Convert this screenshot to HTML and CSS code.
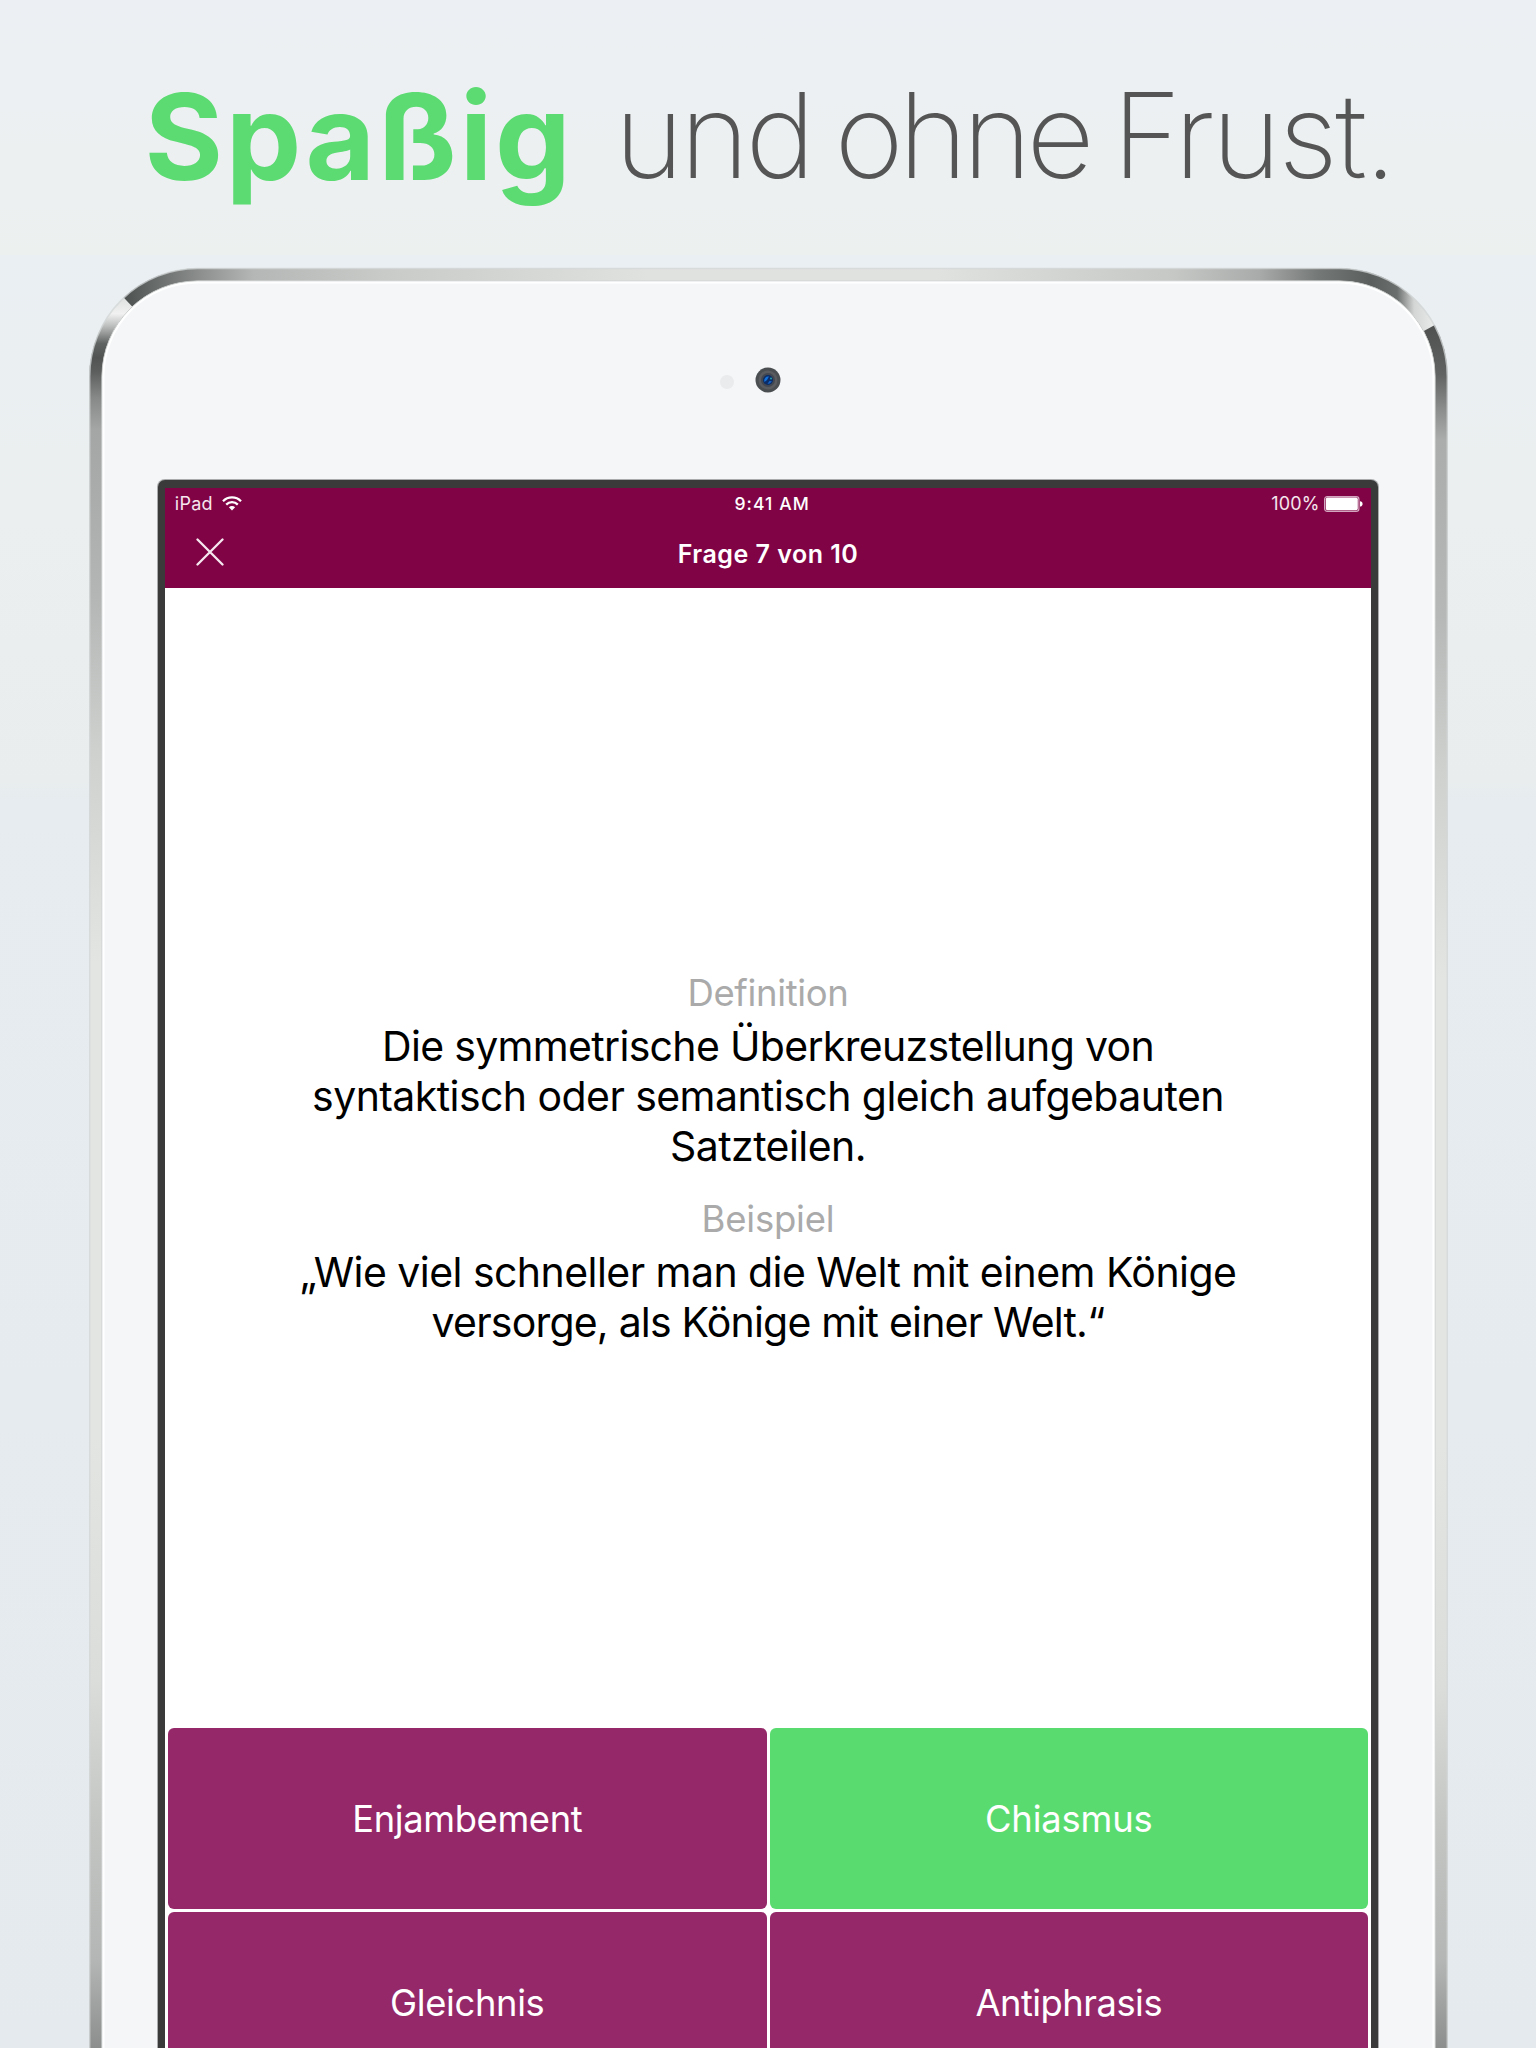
FILE: index.html
```
<!DOCTYPE html>
<html lang="de">
<head>
<meta charset="utf-8">
<title>Spaßig und ohne Frust.</title>
<link rel="stylesheet" href="styles.css">
</head>
<body>
<div class="page">
  <h1 class="headline">
    <span class="headline-strong">Spaßig</span>
    <span class="headline-light"><span class="w-und">und</span><span class="w-ohne">ohne</span><span class="w-frust">Frust.</span></span>
  </h1>

  <main class="device">
    <svg class="bezel" width="1359" height="1781" viewBox="88.5 267 1359 1781" aria-hidden="true">
      <defs>
        <linearGradient id="left" gradientUnits="userSpaceOnUse" x1="0" y1="298" x2="0" y2="2048">
          <stop offset="0" stop-color="#dfe1e0"/><stop offset=".009" stop-color="#f0f1f0"/>
          <stop offset=".016" stop-color="#bcbebd"/><stop offset=".026" stop-color="#606463"/>
          <stop offset=".034" stop-color="#505352"/><stop offset=".042" stop-color="#5b5e5d"/>
          <stop offset=".057" stop-color="#868988"/><stop offset=".075" stop-color="#a3a6a5"/>
          <stop offset=".17" stop-color="#b3b6b4"/><stop offset=".26" stop-color="#cfd1cf"/>
          <stop offset=".38" stop-color="#e3e5e3"/><stop offset=".65" stop-color="#e3e5e3"/>
          <stop offset=".79" stop-color="#dbdddb"/><stop offset=".87" stop-color="#c4c6c4"/>
          <stop offset=".95" stop-color="#b3b6b4"/><stop offset="1" stop-color="#8b8e8c"/>
        </linearGradient>
        <linearGradient id="right" gradientUnits="userSpaceOnUse" x1="0" y1="323" x2="0" y2="2048">
          <stop offset="0" stop-color="#4d504f"/><stop offset=".03" stop-color="#606362"/>
          <stop offset=".05" stop-color="#8a8d8c"/><stop offset=".068" stop-color="#abadac"/>
          <stop offset=".17" stop-color="#b5b8b6"/><stop offset=".26" stop-color="#cfd1cf"/>
          <stop offset=".38" stop-color="#e3e5e3"/><stop offset=".65" stop-color="#e3e5e3"/>
          <stop offset=".79" stop-color="#dbdddb"/><stop offset=".87" stop-color="#c4c6c4"/>
          <stop offset=".95" stop-color="#b3b6b4"/><stop offset="1" stop-color="#8b8e8c"/>
        </linearGradient>
        <linearGradient id="top" gradientUnits="userSpaceOnUse" x1="122" y1="0" x2="1436" y2="0">
          <stop offset="0" stop-color="#4b4f4e"/><stop offset=".02" stop-color="#626665"/>
          <stop offset=".06" stop-color="#8d908f"/><stop offset=".1" stop-color="#b4b7b5"/>
          <stop offset=".2" stop-color="#c9cbc9"/><stop offset=".4" stop-color="#e0e2e0"/>
          <stop offset=".62" stop-color="#e0e2e0"/><stop offset=".8" stop-color="#c6c8c6"/>
          <stop offset=".865" stop-color="#a9abaa"/><stop offset=".91" stop-color="#747877"/>
          <stop offset=".95" stop-color="#5a5e5d"/><stop offset=".97" stop-color="#6a6e6d"/>
          <stop offset=".983" stop-color="#d4d6d5"/><stop offset="1" stop-color="#eceded"/>
        </linearGradient>
      </defs>
      <path d="M100 2060V375.500a96.500 96.500 0 0 1 96.500-96.500H1339.500a96.500 96.500 0 0 1 96.500 96.500V2060z" fill="#f4f6f8"/>
      <g fill="none" stroke-width="12.500">
        <path stroke="url(#left)" d="M95 2060V377A102.500 102.500 0 0 1 127.400 302"/>
        <path stroke="url(#top)" d="M127.400 302A102.500 102.500 0 0 1 197.500 274.500H1338.500A102.500 102.500 0 0 1 1428.800 328"/>
        <path stroke="url(#right)" d="M1428.800 328A102.500 102.500 0 0 1 1441 377V2060"/>
      </g>
      <g fill="none">
        <path stroke="#d3d7d7" stroke-width="1.500" d="M89.200 2060V376.500a108 108 0 0 1 108-108H1338.800a108 108 0 0 1 108 108V2060" stroke-opacity=".75"/>
        <path stroke="#c9cccb" d="M101.500 2060V376.500a95.500 95.500 0 0 1 95.500-95.500H1339a95.500 95.500 0 0 1 95.500 95.500V2060"/>
        <path stroke="#fff" stroke-width="2" d="M103 2060V376.500a94 94 0 0 1 94-94H1339a94 94 0 0 1 94 94V2060"/>
      </g>
    </svg>

    <div class="sensors">
      <span class="sensor"></span>
      <svg class="camera" width="26" height="26" viewBox="0 0 26 26">
        <circle cx="13" cy="13" r="12.500" fill="#4b4e51"/>
        <circle cx="13" cy="13" r="9.500" fill="#5a5c5f"/>
        <circle cx="13" cy="13" r="7" fill="#434850"/>
        <circle cx="13" cy="13" r="5" fill="#0b2c66"/>
        <path d="M9.500 15a4 4 0 0 1 4.500-5.500l-2 3.500z" fill="#1370d8"/>
        <path d="M12.500 16.800c2 .2 3.600-1 4.300-2.600l-2.300-.4z" fill="#1560c0"/>
        <circle cx="16" cy="11.500" r="1" fill="#2aa0a8"/>
      </svg>
    </div>

    <section class="screen">
      <header class="bar">
        <div class="status">
          <div class="status-left">
            <span class="carrier">iPad</span>
            <svg width="20" height="15" viewBox="0 0 20 15" fill="none" stroke="#fff" stroke-width="2.300">
              <path d="M1 5.200a12.700 12.700 0 0 1 18 0"/>
              <path d="M4.200 8.600a8.200 8.200 0 0 1 11.600 0"/>
              <path d="M10 14.500L6.900 11.200a4.400 4.400 0 0 1 6.200 0z" fill="#fff" stroke="none"/>
            </svg>
          </div>
          <span class="time">9:41 AM</span>
          <div class="status-right">
            <span class="percent">100%</span>
            <svg width="39" height="16" viewBox="0 0 39 16">
              <rect x=".6" y=".6" width="34.300" height="14.800" rx="2.600" fill="none" stroke="#d3a6bf" stroke-width="1.200"/>
              <rect x="1.800" y="1.600" width="32" height="12.600" rx="1.600" fill="#fff"/>
              <path d="M36 5.300c1.500 0 2.600 1.200 2.600 2.600S37.500 10.500 36 10.500z" fill="#fff"/>
            </svg>
          </div>
        </div>
        <div class="nav">
          <svg class="close" width="28" height="28" viewBox="0 0 28 28" stroke="#f6e9f0" stroke-width="2.300" stroke-linecap="round">
            <path d="M1.500 1.500l25 25M26.500 1.500l-25 25"/>
          </svg>
          <span class="title">Frage 7 von 10</span>
          <span></span>
        </div>
      </header>

      <div class="question">
        <p class="label label-first">Definition</p>
        <p class="text"><span class="line l1">Die symmetrische Überkreuzstellung von</span><span class="line l2">syntaktisch oder semantisch gleich aufgebauten</span><span class="line l3">Satzteilen.</span></p>
        <p class="label label-next">Beispiel</p>
        <p class="text"><span class="line l4">„Wie viel schneller man die Welt mit einem Könige</span><span class="line l5">versorge, als Könige mit einer Welt.“</span></p>
      </div>

      <div class="answers">
        <button class="answer a1">Enjambement</button>
        <button class="answer a2 correct">Chiasmus</button>
        <button class="answer a3">Gleichnis</button>
        <button class="answer a4">Antiphrasis</button>
      </div>
    </section>
  </main>
</div>
</body>
</html>
```
FILE: styles.css
```
* { box-sizing: border-box; }

body {
  margin: 0;
  font-family: Inter, "Liberation Sans", sans-serif;
}

.page {
  width: 1536px;
  height: 2048px;
  overflow: hidden;
  display: flex;
  flex-direction: column;
  background:
    linear-gradient(#ecf0f4, #ecf0f1 60%, #ecf0ef) 0 0 / 100% 255px no-repeat,
    linear-gradient(#eaeff3 255px, #ebefef 520px, #e9edee 780px, #e6ecef 800px, #e5ebee 1400px, #e4eaed);
}

.headline {
  margin: 0;
  height: 267px;
  flex: none;
  display: flex;
  align-items: flex-start;
  padding: 63.7px 0 0 144.5px;
  white-space: nowrap;
}

.headline-strong {
  width: 470px;
  font-size: 120px;
  line-height: 145.2px;
  font-weight: 700;
  letter-spacing: 2.8px;
  color: #5cdb72;
}

.headline-light {
  display: flex;
  gap: 23px;
  font-size: 118px;
  line-height: 142.8px;
  font-weight: 180;
  color: #555;
}

.w-und { letter-spacing: -3.7px; }
.w-ohne { letter-spacing: -5.18px; }
.w-frust { letter-spacing: -2.7px; }

.device {
  position: relative;
  width: 1359px;
  height: 1781px;
  flex: none;
  margin-left: 88.5px;
  padding: 100px 69px 0 69.5px;
}

.bezel {
  position: absolute;
  inset: 0;
}

.sensors {
  position: relative;
  height: 113px;
  display: flex;
  align-items: flex-start;
  padding-left: 562.3px;
  gap: 21px;
}

.sensor {
  width: 14px;
  height: 14px;
  margin-top: 7.5px;
  border-radius: 50%;
  background: #e9ebec;
}

.screen {
  position: relative;
  width: 1220px;
  height: 1600px;
  border: 7px solid #3a3a3a;
  border-top-width: 8px;
  border-radius: 7px;
  box-shadow: 0 0 0 1px #a9abac;
  background: #fff;
  display: flex;
  flex-direction: column;
}

.bar {
  height: 100px;
  flex: none;
  background: #800445;
  color: #fff;
}

.status {
  height: 32px;
  display: grid;
  grid-template-columns: 1fr auto 1fr;
  align-items: start;
  padding: 5.1px 8px 0 9.8px;
  font-size: 18px;
  line-height: 22px;
}

.status-left,
.status-right {
  display: flex;
  align-items: center;
}

.status-left { gap: 9px; }
.status-left svg { margin-top: -2px; }

.status-right {
  justify-content: flex-end;
  gap: 4.5px;
  color: #f6e6ee;
}

.status-right svg { margin-top: -1px; }

.carrier { letter-spacing: .25px; color: #f6e6ee; }
.percent { letter-spacing: .12px; }

.time {
  font-size: 17.6px;
  font-weight: 550;
  letter-spacing: 1.05px;
  margin-left: 6.5px;
}

.nav {
  height: 68px;
  display: grid;
  grid-template-columns: 1fr auto 1fr;
  padding: 18px 30.5px 0;
}

.title {
  margin-top: 1px;
  font-size: 25px;
  line-height: 30px;
  font-weight: 600;
  letter-spacing: .49px;
}

.question {
  height: 1137px;
  flex: none;
  padding-top: 383px;
  text-align: center;
  white-space: nowrap;
}

.label {
  margin: 0 0 5.6px;
  font-size: 36.5px;
  line-height: 44px;
  color: #aaa;
}

.label-first { letter-spacing: -.35px; }
.label-next { margin-top: 25.7px; letter-spacing: -.2px; }

.text {
  margin: 0;
  font-size: 41px;
  line-height: 50.3px;
  color: #000;
}

.line { display: block; }
.l1 { letter-spacing: -.68px; }
.l2 { letter-spacing: -.57px; }
.l3 { letter-spacing: -.55px; }
.l4 { letter-spacing: -.55px; }
.l5 { letter-spacing: -.79px; }

.answers {
  display: grid;
  grid-template-columns: 1fr 1fr;
  grid-auto-rows: 181px;
  gap: 3px;
  padding: 3px;
}

.answer {
  border: 0;
  border-radius: 6px;
  padding: 0;
  background: #952869;
  color: #fff;
  font: 400 36.3px/44px Inter, "Liberation Sans", sans-serif;
}

.correct { background: #59db70; }
.a1 { letter-spacing: -.35px; }
.a2 { letter-spacing: -.15px; }
.a3 { letter-spacing: -.35px; }
.a4 { letter-spacing: -.48px; }
```
